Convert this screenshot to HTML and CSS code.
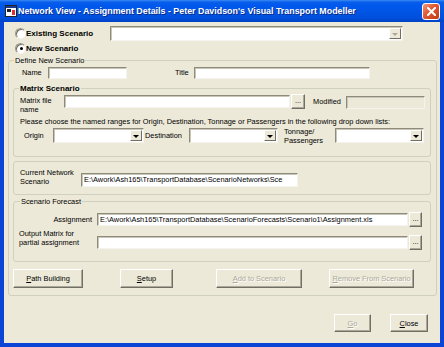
FILE: index.html
```html
<!DOCTYPE html>
<html>
<head>
<meta charset="utf-8">
<title>Network View - Assignment Details</title>
<link rel="stylesheet" href="styles.css">
</head>
<body>
<div class="window">
  <div class="titlebar">
    <svg class="appicon" width="12" height="12" viewBox="0 0 12 12">
      <rect x="0.5" y="0.5" width="11" height="11" fill="#fff" stroke="#222"/>
      <rect x="1" y="1" width="10" height="2" fill="#1b3a8c"/>
      <rect x="2" y="4" width="4" height="3" fill="#222"/>
      <rect x="7" y="5" width="3" height="5" fill="#d33"/>
    </svg>
    <span class="title">Network View - Assignment Details - Peter Davidson's Visual Transport Modeller</span>
    <div class="close">
      <svg width="9" height="9" viewBox="0 0 9 9"><path d="M1 1L8 8M8 1L1 8" stroke="#fff" stroke-width="2" stroke-linecap="square"/></svg>
    </div>
  </div>
  <div class="client">
    <div class="row-existing">
      <div class="opt"><span class="radio"></span><span class="rlabel">Existing Scenario</span></div>
      <div class="combo wide"><div class="field"></div><div class="ddbtn disabled"><span class="tri"></span></div></div>
    </div>
    <div class="row-new">
      <div class="opt"><span class="radio checked"></span><span class="rlabel">New Scenario</span></div>
    </div>

    <fieldset class="group define">
      <legend>Define New Scenario</legend>
      <div class="name-row">
        <span class="lbl name-lbl">Name</span>
        <div class="textbox name-box"></div>
        <span class="lbl title-lbl">Title</span>
        <div class="textbox title-box"></div>
      </div>

      <fieldset class="group matrix">
        <legend class="bold">Matrix Scenario</legend>
        <div class="file-row">
          <span class="lbl two file-lbl">Matrix file<br>name</span>
          <div class="textbox file-box"></div>
          <div class="btn dots">...</div>
          <span class="lbl mod-lbl">Modified</span>
          <div class="textbox mod-box"></div>
        </div>
        <div class="instr">Please choose the named ranges for Origin, Destination, Tonnage or Passengers in the following drop down lists:</div>
        <div class="origin-row">
          <span class="lbl origin-lbl">Origin</span>
          <div class="combo small c-origin"><div class="field"></div><div class="ddbtn"><span class="tri"></span></div></div>
          <span class="lbl dest-lbl">Destination</span>
          <div class="combo small c-dest"><div class="field"></div><div class="ddbtn"><span class="tri"></span></div></div>
          <span class="lbl two ton-lbl">Tonnage/<br>Passengers</span>
          <div class="combo small c-ton"><div class="field"></div><div class="ddbtn"><span class="tri"></span></div></div>
        </div>
      </fieldset>

      <fieldset class="group current">
        <div class="current-row">
          <span class="lbl two cur-lbl">Current Network<br>Scenario</span>
          <div class="textbox cur-box">E:\Awork\Ash165\TransportDatabase\ScenarioNetworks\Sce</div>
        </div>
      </fieldset>

      <fieldset class="group forecast">
        <legend>Scenario Forecast</legend>
        <div class="assign-row">
          <span class="lbl assign-lbl">Assignment</span>
          <div class="textbox path-box">E:\Awork\Ash165\TransportDatabase\ScenarioForecasts\Scenario1\Assignment.xls</div>
          <div class="btn dots">...</div>
        </div>
        <div class="output-row">
          <span class="lbl two out-lbl">Output Matrix for<br>partial assignment</span>
          <div class="textbox path-box"></div>
          <div class="btn dots">...</div>
        </div>
      </fieldset>

      <div class="actions">
        <div class="btn b-path"><u>P</u>ath Building</div>
        <div class="btn b-setup"><u>S</u>etup</div>
        <div class="btn b-add disabled"><u>A</u>dd to Scenario</div>
        <div class="btn b-remove disabled"><u>R</u>emove From Scenario</div>
      </div>
    </fieldset>

    <div class="footer">
      <div class="btn b-go disabled"><u>G</u>o</div>
      <div class="btn b-close"><u>C</u>lose</div>
    </div>
  </div>
</div>
</body>
</html>
```

FILE: styles.css
```css
* { box-sizing: border-box; }
html, body { margin: 0; padding: 0; }
body {
  width: 444px;
  height: 347px;
  overflow: hidden;
  background: #ffffff;
  font-family: "Liberation Sans", Arial, sans-serif;
  font-size: 7.4px;
  color: #000;
}
.window {
  width: 444px;
  height: 347px;
  display: flex;
  flex-direction: column;
}

/* ---------- title bar ---------- */
.titlebar {
  height: 22px;
  flex: none;
  display: flex;
  align-items: center;
  padding: 0 4px 0 5px;
  background: linear-gradient(#3b8cf6 0, #0a5fe8 2px, #0058ee 5px, #0055e5 50%, #0050dd 80%, #0043c6 100%);
}
.appicon { flex: none; display: block; }
.title {
  margin-left: 1px;
  color: #fff;
  font-weight: bold;
  font-size: 8.9px;
  white-space: nowrap;
  text-shadow: 1px 1px 0 #0a2a8a;
  flex: 1;
}
.close {
  width: 18px;
  height: 17px;
  border: 1px solid #fff;
  border-radius: 3px;
  background: linear-gradient(135deg, #f29a7e 0, #e35b36 40%, #c23a14 100%);
  display: flex;
  align-items: center;
  justify-content: center;
}
.close svg { display: block; }

/* ---------- client ---------- */
.client {
  flex: 1;
  background: #ECE9D8;
  border: solid #0a45d6;
  border-width: 0 4px 4px 4px;
  display: flex;
  flex-direction: column;
}

.row-existing {
  display: flex;
  align-items: center;
  height: 15px;
  margin-top: 4px;
}
.row-new {
  display: flex;
  align-items: center;
  height: 12px;
  margin-top: 1px;
}
.opt {
  display: flex;
  align-items: center;
  width: 106px;
  padding-left: 11px;
  flex: none;
}
.radio {
  width: 11px;
  height: 11px;
  border-radius: 50%;
  background: #fff;
  border: 1px solid;
  border-color: #9d9a8b #f4f3ee #f4f3ee #9d9a8b;
  box-shadow: inset 1px 1px 0 #716f64;
  flex: none;
  display: flex;
  align-items: center;
  justify-content: center;
}
.radio.checked::after {
  content: "";
  width: 3px;
  height: 3px;
  border-radius: 50%;
  background: #000;
  margin: 1px 0 0 1px;
}
.rlabel {
  font-weight: bold;
  font-size: 8px;
  margin-left: 0;
  white-space: nowrap;
}
.bold { font-weight: bold; font-size: 8px; }

/* ---------- controls ---------- */
.textbox {
  background: #fff;
  border: 1px solid;
  border-color: #8e8b7d #f4f3ee #f4f3ee #8e8b7d;
  box-shadow: inset 1px 1px 0 #c9c6b8;
  height: 12px;
  flex: none;
  white-space: nowrap;
  overflow: hidden;
  line-height: 10px;
  padding-left: 2px;
}
.combo {
  display: flex;
  height: 15px;
  background: #fff;
  border: 1px solid;
  border-color: #8e8b7d #f4f3ee #f4f3ee #8e8b7d;
  box-shadow: inset 1px 1px 0 #c9c6b8;
  padding: 1px;
  flex: none;
}
.combo .field { flex: 1; }
.ddbtn {
  width: 12px;
  background: #ECE9D8;
  border: 1px solid;
  border-color: #fff #716f64 #716f64 #fff;
  display: flex;
  align-items: center;
  justify-content: center;
}
.tri {
  width: 0;
  height: 0;
  border-left: 3px solid transparent;
  border-right: 3px solid transparent;
  border-top: 3px solid #000;
  margin-top: 1px;
}
.ddbtn.disabled .tri { border-top-color: #aca899; }
.combo.wide { width: 293px; }

.btn {
  background: #ECE9D8;
  border: 1px solid;
  border-color: #fff #716f64 #716f64 #fff;
  box-shadow: inset -1px -1px 0 #aca899;
  display: flex;
  align-items: center;
  justify-content: center;
  white-space: nowrap;
  flex: none;
}
.btn.disabled {
  color: #aca899;
  text-shadow: 1px 1px 0 #fff;
}
.btn.dots {
  width: 14px;
  height: 15px;
  line-height: 8px;
  align-items: flex-end;
  padding-bottom: 3px;
}

.lbl { white-space: nowrap; flex: none; }
.lbl.two { line-height: 9px; }

/* ---------- group boxes ---------- */
fieldset {
  margin: 0;
  min-width: 0;
  border: 1px solid #d0d0bf;
  border-radius: 3px;
}
legend {
  padding: 0 1px;
  height: 11px;
  line-height: 11px;
}
.define {
  margin: 1px 0 0 4px;
  width: 429px;
  padding: 0 5px 7px 4px;
}
.define > legend { margin-left: 1px; }

.name-row {
  display: flex;
  align-items: center;
  height: 13px;
}
.name-row .textbox { align-self: flex-end; }
.name-lbl { margin-left: 9px; width: 26px; }
.name-box { width: 79px; }
.title-lbl { margin-left: 48px; width: 19px; }
.title-box { width: 176px; }

.matrix {
  margin-top: 4px;
  padding: 0 5px 13px 5px;
}
.file-row {
  display: flex;
  align-items: center;
  height: 15px;
}
.file-lbl { width: 44px; margin-left: 1px; padding-top: 6px; }
.file-box { width: 226px; height: 13px; }
.file-row .dots { margin-left: 1px; }
.mod-lbl { margin-left: 8px; width: 33px; }
.mod-box { width: 79px; background: #ECE9D8; height: 13px; margin-top: 2px; }
.instr {
  margin-top: 8px;
  margin-left: 1px;
  line-height: 10px;
  height: 10px;
  white-space: nowrap;
}
.origin-row {
  display: flex;
  align-items: center;
  height: 15px;
  margin-top: 1px;
}
.origin-lbl { margin-left: 5px; width: 29px; }
.c-origin { width: 91px; }
.dest-lbl { margin-left: 1px; width: 44px; }
.c-dest { width: 89px; }
.ton-lbl { margin-left: 6px; width: 51px; }
.c-ton { width: 89px; }

.current {
  margin-top: 4px;
  padding: 7px 5px 7px 6px;
}
.current-row {
  display: flex;
  align-items: center;
  height: 18px;
}
.cur-lbl { width: 61px; margin-top: -3px; }
.cur-box { width: 217px; height: 14px; margin-top: 4px; line-height: 12px; }

.forecast {
  margin-top: 1px;
  padding: 0 5px 11px 5px;
}
.forecast > legend { margin-left: 1px; }
.assign-row {
  display: flex;
  align-items: center;
  height: 15px;
  margin-top: 5px;
}
.assign-lbl { width: 73px; text-align: right; }
.path-box { margin-left: 5px; width: 311px; height: 13px; line-height: 11px; }
.assign-row .dots, .output-row .dots { margin-left: 1px; width: 13px; }
.output-row {
  display: flex;
  align-items: flex-end;
  height: 20px;
  margin-top: 3px;
}
.output-row .path-box { margin-bottom: 1px; }
.out-lbl { width: 73px; margin-bottom: 3px; }

.actions {
  display: flex;
  height: 19px;
  margin-top: 7px;
}
.actions .btn { height: 19px; }
.b-path { width: 70px; }
.b-setup { width: 53px; margin-left: 37px; }
.b-add { width: 86px; margin-left: 43px; }
.b-remove { width: 85px; margin-left: 27px; }

.footer {
  display: flex;
  margin-top: 18px;
  padding-left: 330px;
}
.footer .btn { height: 18px; }
.b-go { width: 37px; }
.b-close { width: 38px; margin-left: 19px; }
```
